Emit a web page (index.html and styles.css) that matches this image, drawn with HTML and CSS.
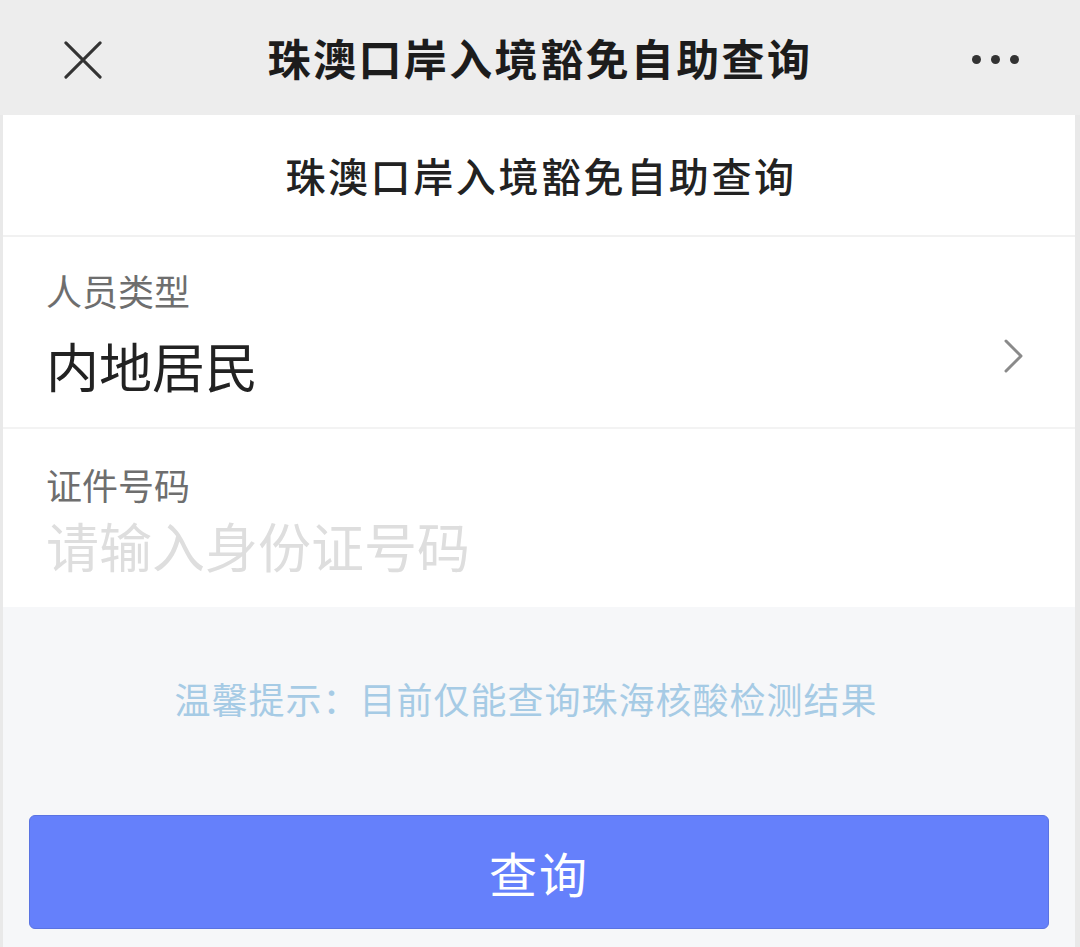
FILE: index.html
```html
<!DOCTYPE html>
<html lang="zh-CN">
<head>
<meta charset="utf-8">
<title>珠澳口岸入境豁免自助查询</title>
<link rel="stylesheet" href="styles.css">
</head>
<body>
<header class="navbar">
  <div class="nav-left">
    <svg class="icon-close" width="38" height="38" viewBox="0 0 40 40">
      <path d="M2 2 L38 38 M38 2 L2 38" stroke="#333" stroke-width="3.2" stroke-linecap="round" fill="none"/>
    </svg>
  </div>
  <div class="nav-title">珠澳口岸入境豁免自助查询</div>
  <div class="nav-right">
    <span class="dot"></span><span class="dot"></span><span class="dot"></span>
  </div>
</header>
<main class="page">
  <section class="card">
    <div class="page-title">珠澳口岸入境豁免自助查询</div>
    <div class="field field-select">
      <div class="field-body">
        <div class="field-label">人员类型</div>
        <div class="field-value">内地居民</div>
      </div>
      <svg class="chevron" width="22" height="36" viewBox="0 0 22 36">
        <path d="M3 3 L18 18 L3 33" stroke="#8a8a8a" stroke-width="3" stroke-linecap="round" stroke-linejoin="round" fill="none"/>
      </svg>
    </div>
    <div class="field field-input">
      <div class="field-body">
        <div class="field-label">证件号码</div>
        <div class="field-placeholder">请输入身份证号码</div>
      </div>
    </div>
  </section>
  <div class="tip">温馨提示：目前仅能查询珠海核酸检测结果</div>
  <div class="actions">
    <button class="btn-primary">查询</button>
  </div>
</main>
</body>
</html>
```

FILE: styles.css
```css
html, body {
  margin: 0;
  padding: 0;
}
body {
  background: #e9e9e9;
  font-family: "Noto Sans CJK SC", "Noto Sans", sans-serif;
  width: 1080px;
  height: 947px;
  overflow: hidden;
}
.navbar {
  height: 115px;
  background: #ededed;
  display: grid;
  grid-template-columns: 168px 1fr 168px;
  align-items: center;
}
.nav-left {
  display: flex;
  align-items: center;
  padding-left: 64px;
  padding-top: 4px;
}
.nav-title {
  text-align: center;
  font-size: 43px;
  font-weight: 700;
  color: #1c1c1c;
  letter-spacing: 2.4px;
  line-height: 115px;
  padding-left: 0;
}
.nav-right {
  display: flex;
  align-items: center;
  gap: 10px;
  padding-left: 60px;
  padding-top: 3px;
}
.dot {
  width: 9px;
  height: 9px;
  border-radius: 50%;
  background: #333;
}
.page {
  margin: 0 5px 0 3px;
  background: #f6f7f9;
  height: 832px;
}
.card {
  background: #fff;
}
.page-title {
  height: 120px;
  display: flex;
  align-items: center;
  justify-content: center;
  font-size: 40px;
  font-weight: 500;
  color: #222;
  letter-spacing: 2.6px;
  border-bottom: 2px solid #f1f1f1;
  padding-left: 4px;
}
.field {
  display: flex;
  align-items: flex-start;
  padding: 0 50px 0 43px;
  box-sizing: border-box;
}
.field-select {
  height: 192px;
  padding-top: 31px;
  border-bottom: 2px solid #f3f3f3;
}
.field-input {
  height: 178px;
  padding-top: 33px;
}
.field-body {
  flex: 1;
}
.field-label {
  font-size: 36px;
  color: #6e6e6e;
  line-height: 44px;
}
.field-value {
  font-size: 53px;
  color: #222;
  line-height: 60px;
  margin-top: 23px;
}
.field-placeholder {
  font-size: 53px;
  color: #dedede;
  line-height: 60px;
  margin-top: 9px;
}
.chevron {
  margin-top: 70px;
}
.tip {
  height: 208px;
  box-sizing: border-box;
  padding: 0 26px 26px 0;
  display: flex;
  align-items: center;
  justify-content: center;
  font-size: 36px;
  color: #a6cbe5;
  letter-spacing: 1px;
}
.actions {
  padding: 0 26px;
}
.btn-primary {
  display: block;
  width: 100%;
  height: 114px;
  background: #6580fb;
  border: 1px solid #5a73e2;
  border-radius: 6px;
  color: #fff;
  font-family: "Noto Sans CJK SC", "Noto Sans", sans-serif;
  font-size: 48px;
  letter-spacing: 2px;
  padding: 0;
}
```
